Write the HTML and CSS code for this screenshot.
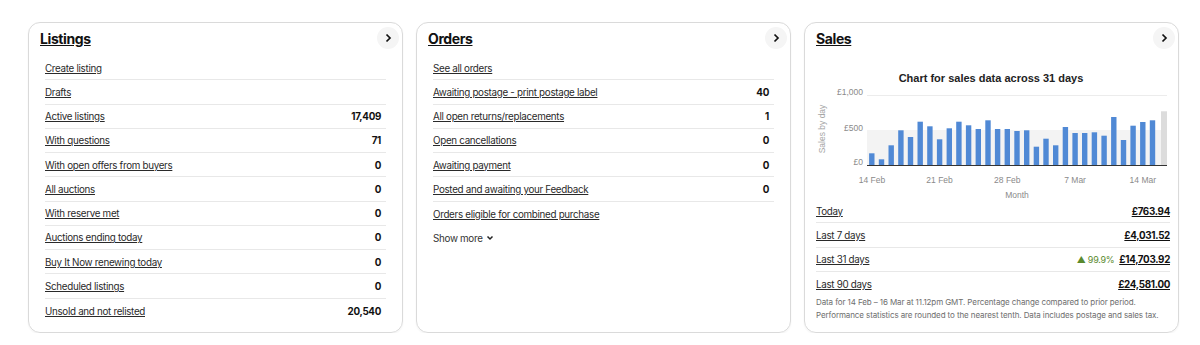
FILE: index.html
```html
<!DOCTYPE html>
<html lang="en">
<head>
    <meta charset="UTF-8">
    <title>Seller Hub overview</title>
    <link rel="stylesheet" href="styles.css">
</head>
<body>
<div class="board">

    <!-- Listings -->
    <section class="card">
        <header class="card-head">
            <h2 class="card-title"><a href="#">Listings</a></h2>
            <a class="card-more" href="#"><svg width="10" height="10" viewBox="0 0 10 10"><path d="M3.5 1.5 L7 5 L3.5 8.5" /></svg></a>
        </header>
        <ul class="stat-list indent">
            <li class="stat-row"><a href="#">Create listing</a></li>
            <li class="stat-row"><a href="#">Drafts</a></li>
            <li class="stat-row"><a href="#">Active listings</a><span class="stat-num">17,409</span></li>
            <li class="stat-row"><a href="#">With questions</a><span class="stat-num">71</span></li>
            <li class="stat-row"><a href="#">With open offers from buyers</a><span class="stat-num">0</span></li>
            <li class="stat-row"><a href="#">All auctions</a><span class="stat-num">0</span></li>
            <li class="stat-row"><a href="#">With reserve met</a><span class="stat-num">0</span></li>
            <li class="stat-row"><a href="#">Auctions ending today</a><span class="stat-num">0</span></li>
            <li class="stat-row"><a href="#">Buy It Now renewing today</a><span class="stat-num">0</span></li>
            <li class="stat-row"><a href="#">Scheduled listings</a><span class="stat-num">0</span></li>
            <li class="stat-row"><a href="#">Unsold and not relisted</a><span class="stat-num">20,540</span></li>
        </ul>
    </section>

    <!-- Orders -->
    <section class="card">
        <header class="card-head">
            <h2 class="card-title"><a href="#">Orders</a></h2>
            <a class="card-more" href="#"><svg width="10" height="10" viewBox="0 0 10 10"><path d="M3.5 1.5 L7 5 L3.5 8.5" /></svg></a>
        </header>
        <ul class="stat-list indent">
            <li class="stat-row"><a href="#">See all orders</a></li>
            <li class="stat-row"><a href="#">Awaiting postage - print postage label</a><span class="stat-num">40</span></li>
            <li class="stat-row"><a href="#">All open returns/replacements</a><span class="stat-num">1</span></li>
            <li class="stat-row"><a href="#">Open cancellations</a><span class="stat-num">0</span></li>
            <li class="stat-row"><a href="#">Awaiting payment</a><span class="stat-num">0</span></li>
            <li class="stat-row"><a href="#">Posted and awaiting your Feedback</a><span class="stat-num">0</span></li>
            <li class="stat-row"><a href="#">Orders eligible for combined purchase</a></li>
        </ul>
        <button class="show-more" type="button">Show more <svg width="8" height="8" viewBox="0 0 8 8"><path d="M1.5 2.5 L4 5 L6.5 2.5" /></svg></button>
    </section>

    <!-- Sales -->
    <section class="card">
        <header class="card-head">
            <h2 class="card-title"><a href="#">Sales</a></h2>
            <a class="card-more" href="#"><svg width="10" height="10" viewBox="0 0 10 10"><path d="M3.5 1.5 L7 5 L3.5 8.5" /></svg></a>
        </header>

        <svg class="sales-chart" width="352" height="141" viewBox="0 0 352 141">
            <text class="chart-title" x="175" y="24" text-anchor="middle">Chart for sales data across 31 days</text>
            <!-- bands + grid -->
            <rect x="51" y="72" width="300" height="35" fill="#f3f3f3" />
            <line x1="51" y1="37.5" x2="351" y2="37.5" stroke="#ececec" />
            <!-- y axis -->
            <text class="axis-label" x="47" y="37" text-anchor="end">£1,000</text>
            <text class="axis-label" x="47" y="73" text-anchor="end">£500</text>
            <text class="axis-label" x="47" y="107" text-anchor="end">£0</text>
            <text class="axis-title" transform="translate(9 71) rotate(-90)" text-anchor="middle">Sales by day</text>
            <!-- bars, 70px = £1,000 -->
            <g fill="#5089d5">
                <rect x="53.1" y="95.3" width="5.4" height="11.7" />
                <rect x="62.8" y="101.3" width="5.4" height="5.7" />
                <rect x="72.5" y="87.3" width="5.4" height="19.7" />
                <rect x="82.2" y="72.3" width="5.4" height="34.7" />
                <rect x="91.8" y="79" width="5.4" height="28" />
                <rect x="101.5" y="63.7" width="5.4" height="43.3" />
                <rect x="111.2" y="68.3" width="5.4" height="38.7" />
                <rect x="120.9" y="81.3" width="5.4" height="25.7" />
                <rect x="130.6" y="70.3" width="5.4" height="36.7" />
                <rect x="140.2" y="63.7" width="5.4" height="43.3" />
                <rect x="149.9" y="67.3" width="5.4" height="39.7" />
                <rect x="159.6" y="71" width="5.4" height="36" />
                <rect x="169.3" y="62.3" width="5.4" height="44.7" />
                <rect x="178.9" y="71" width="5.4" height="36" />
                <rect x="188.6" y="71" width="5.4" height="36" />
                <rect x="198.3" y="73" width="5.4" height="34" />
                <rect x="208" y="72.3" width="5.4" height="34.7" />
                <rect x="217.7" y="88.7" width="5.4" height="18.3" />
                <rect x="227.3" y="80.7" width="5.4" height="26.3" />
                <rect x="237" y="87.3" width="5.4" height="19.7" />
                <rect x="246.7" y="69" width="5.4" height="38" />
                <rect x="256.4" y="75" width="5.4" height="32" />
                <rect x="266" y="75" width="5.4" height="32" />
                <rect x="275.7" y="74.3" width="5.4" height="32.7" />
                <rect x="285.4" y="77.7" width="5.4" height="29.3" />
                <rect x="295.1" y="59" width="5.4" height="48" />
                <rect x="304.8" y="82" width="5.4" height="25" />
                <rect x="314.4" y="67.7" width="5.4" height="39.3" />
                <rect x="324.1" y="64" width="5.4" height="43" />
                <rect x="333.8" y="62.3" width="5.4" height="44.7" />
            </g>
            <rect x="345" y="53.3" width="6" height="53.7" fill="#dcdcdc" />
            <line x1="51" y1="107.5" x2="351" y2="107.5" stroke="#333" />
            <!-- x axis -->
            <text class="axis-label" x="56" y="125" text-anchor="middle">14 Feb</text>
            <text class="axis-label" x="123.6" y="125" text-anchor="middle">21 Feb</text>
            <text class="axis-label" x="191.3" y="125" text-anchor="middle">28 Feb</text>
            <text class="axis-label" x="259.1" y="125" text-anchor="middle">7 Mar</text>
            <text class="axis-label" x="326.8" y="125" text-anchor="middle">14 Mar</text>
            <text class="axis-label" x="201" y="140" text-anchor="middle">Month</text>
        </svg>

        <ul class="stat-list sales-list">
            <li class="stat-row"><a href="#">Today</a><a class="stat-num" href="#">£763.94</a></li>
            <li class="stat-row"><a href="#">Last 7 days</a><a class="stat-num" href="#">£4,031.52</a></li>
            <li class="stat-row"><a href="#">Last 31 days</a><span class="stat-right"><span class="trend">▲ 99.9%</span><a class="stat-num" href="#">£14,703.92</a></span></li>
            <li class="stat-row"><a href="#">Last 90 days</a><a class="stat-num" href="#">£24,581.00</a></li>
        </ul>
        <p class="sales-note">Data for 14 Feb – 16 Mar at 11.12pm GMT. Percentage change compared to prior period. Performance statistics are rounded to the nearest tenth. Data includes postage and sales tax.</p>
    </section>

</div>
</body>
</html>
```

FILE: styles.css
```css
body {
    margin: 0;
    background: #fff;
    color: #2a2a2a;
    font-family: "Inter", "Liberation Sans", sans-serif;
}
a {
    color: inherit;
}
.board {
    display: grid;
    grid-template-columns: repeat(3, 375px);
    gap: 13px;
    padding: 22px 0 0 28px;
}
.card {
    height: 311px;
    box-sizing: border-box;
    border: 1px solid #dadada;
    border-radius: 12px;
    padding: 0 3px 0 11px;
    box-shadow: 0 1px 2px rgba(0, 0, 0, 0.05);
}
.card-head {
    display: flex;
    justify-content: space-between;
    align-items: center;
    height: 30px;
}
.card-title {
    margin: 0;
    font-size: 14px;
    font-weight: 700;
    letter-spacing: -0.4px;
    color: #111;
}
.card-more {
    width: 22px;
    height: 22px;
    border-radius: 50%;
    background: #f5f5f5;
    display: flex;
    align-items: center;
    justify-content: center;
}
.card-more path {
    fill: none;
    stroke: #111;
    stroke-width: 1.7;
}
.stat-list {
    list-style: none;
    margin: 3px 13px 0 0;
    padding: 0;
}
.stat-list.indent {
    margin-left: 5px;
}
.stat-row {
    height: 24.27px;
    box-sizing: border-box;
    display: flex;
    justify-content: space-between;
    align-items: center;
    padding: 1px 5px 0 0;
    border-bottom: 1px solid #e8e8e8;
    font-size: 9.8px;
    letter-spacing: -0.3px;
}
.stat-row:last-child {
    border-bottom: none;
}
.stat-num {
    font-weight: 700;
    color: #111;
}
.show-more {
    margin: 7px 0 0 5px;
    padding: 0;
    border: none;
    background: none;
    font: inherit;
    font-size: 9.8px;
    letter-spacing: -0.3px;
    color: #333;
    display: flex;
    align-items: center;
    gap: 3px;
}
.show-more path {
    fill: none;
    stroke: #222;
    stroke-width: 1.5;
}

/* sales chart */
.sales-chart {
    display: block;
    margin-top: 5px;
    font-family: "Liberation Sans", Arial, sans-serif;
}
.chart-title {
    font-size: 11px;
    font-weight: 700;
    fill: #222;
}
.axis-label {
    font-size: 8.5px;
    fill: #8a8a8a;
}
.axis-title {
    font-size: 8.5px;
    fill: #a5a5a5;
}
.sales-list {
    margin: 0 5px 0 0;
}
.sales-list .stat-row {
    padding-right: 0;
}
.stat-right {
    display: flex;
    align-items: center;
    gap: 5px;
}
.trend {
    color: #5a8a2e;
    font-size: 9px;
}
.sales-note {
    margin: 0;
    font-size: 8px;
    line-height: 13px;
    letter-spacing: -0.1px;
    color: #6e6e6e;
}
```
